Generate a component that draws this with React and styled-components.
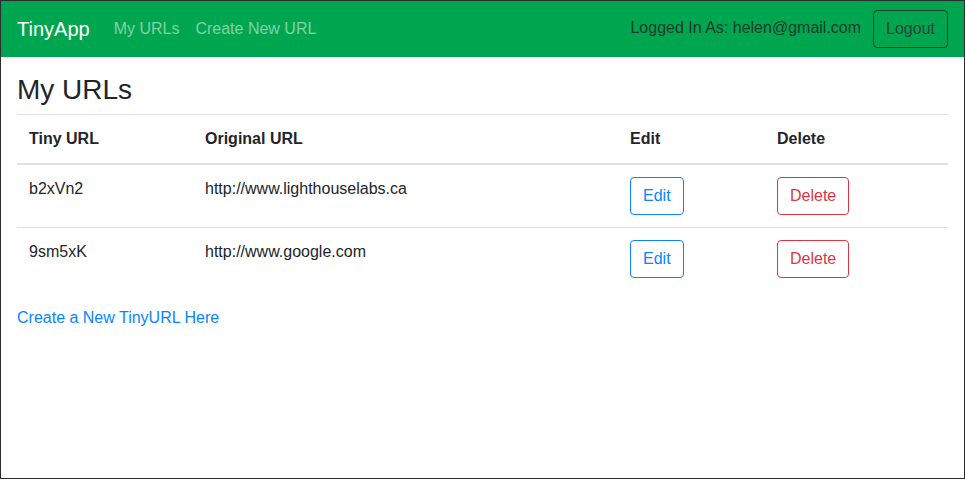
import styled, { createGlobalStyle } from "styled-components";

const GlobalStyle = createGlobalStyle`
    html, body {
        margin: 0;
        padding: 0;
        height: 100%;
    }
    body {
        font-family: "Liberation Sans", Arial, sans-serif;
        font-size: 16px;
        line-height: 1.5;
        color: #212529;
        background: #fff;
    }
    * {
        box-sizing: border-box;
    }
`

const Frame = styled.div`
    height: 100vh;
    border: 1px solid #2d2d2d;
    background: #fff;
`

const Navbar = styled.nav`
    display: flex;
    align-items: center;
    justify-content: space-between;
    height: 56px;
    padding: 0 16px;
    background-color: #00a550;
`

const NavLeft = styled.div`
    display: flex;
    align-items: center;
`

const Brand = styled.a`
    color: #fff;
    font-size: 20px;
    line-height: 30px;
    margin-right: 16px;
    text-decoration: none;
`

const NavLink = styled.a`
    color: rgba(255, 255, 255, 0.5);
    padding: 8px;
    text-decoration: none;
`

const NavRight = styled.div`
    display: flex;
    align-items: center;
    gap: 12px;
`

const NavText = styled.span`
    color: #1d3a2a;
    margin-top: -2px;
`

const OutlineButton = styled.button`
    font-family: inherit;
    font-size: 16px;
    line-height: 24px;
    padding: 6px 12px;
    border-radius: 4px;
    background: transparent;
    border: 1px solid ${(p) => p.$color};
    color: ${(p) => p.$text || p.$color};
    cursor: pointer;
`

const Main = styled.main`
    padding: 16px 16px 0;
`

const Title = styled.h3`
    font-size: 28px;
    font-weight: 400;
    line-height: 1.2;
    margin: 0 0 7px;
`

const Table = styled.table`
    width: 100%;
    border-collapse: collapse;
    margin-bottom: 16px;
`

const Th = styled.th`
    text-align: left;
    font-weight: 700;
    padding: 12px;
    vertical-align: bottom;
    border-top: 1px solid #dee2e6;
    border-bottom: 2px solid #dee2e6;
    width: ${(p) => p.$w};
`

const Td = styled.td`
    padding: 12px;
    vertical-align: top;
    border-top: 1px solid #dee2e6;
`

const Link = styled.a`
    color: #0a84ff;
    text-decoration: none;
`

const urls = [
    { id: "b2xVn2", long: "http://www.lighthouselabs.ca" },
    { id: "9sm5xK", long: "http://www.google.com" },
];

const App = () => {
    return (
        <>
            <GlobalStyle />
            <Frame>
                <Navbar>
                    <NavLeft>
                        <Brand href="#">TinyApp</Brand>
                        <NavLink href="#">My URLs</NavLink>
                        <NavLink href="#">Create New URL</NavLink>
                    </NavLeft>
                    <NavRight>
                        <NavText>Logged In As: helen@gmail.com</NavText>
                        <OutlineButton $color="#1f3e2c" $text="#2a4436">Logout</OutlineButton>
                    </NavRight>
                </Navbar>
                <Main>
                    <Title>My URLs</Title>
                    <Table>
                        <thead>
                            <tr>
                                <Th $w="176px">Tiny URL</Th>
                                <Th $w="425px">Original URL</Th>
                                <Th $w="147px">Edit</Th>
                                <Th>Delete</Th>
                            </tr>
                        </thead>
                        <tbody>
                            {urls.map((url) => (
                                <tr key={url.id}>
                                    <Td>{url.id}</Td>
                                    <Td>{url.long}</Td>
                                    <Td>
                                        <OutlineButton $color="#0a84ff">Edit</OutlineButton>
                                    </Td>
                                    <Td>
                                        <OutlineButton $color="#dc3545">Delete</OutlineButton>
                                    </Td>
                                </tr>
                            ))}
                        </tbody>
                    </Table>
                    <Link href="#">Create a New TinyURL Here</Link>
                </Main>
            </Frame>
        </>
    );
};

export default App;
